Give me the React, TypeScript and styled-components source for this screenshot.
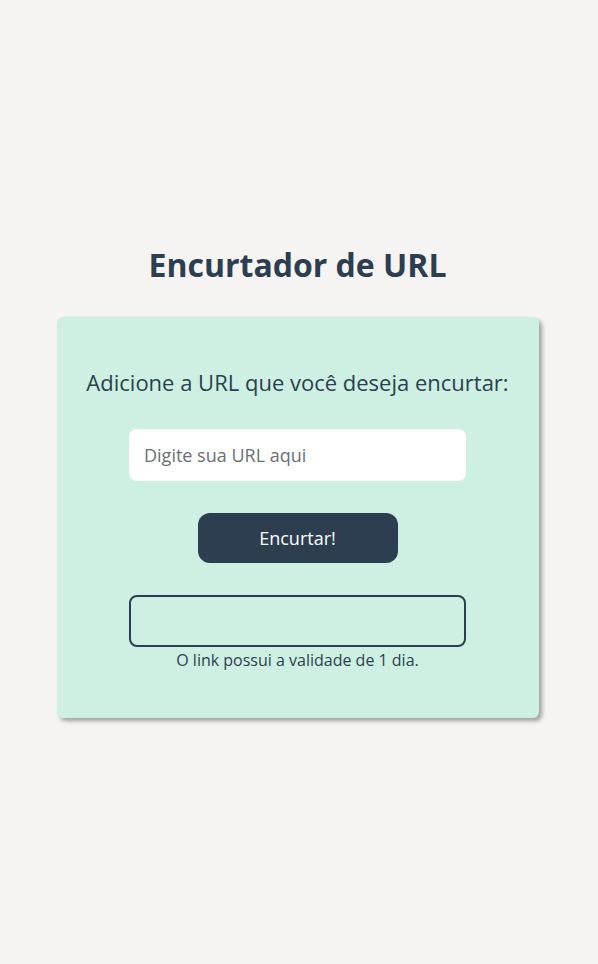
import React from "react";
import styled, { createGlobalStyle } from "styled-components";

const Global = createGlobalStyle`
  html, body { margin: 0; padding: 0; }
  body {
    background: #f5f4f2;
    font-family: "Open Sans", "Noto Sans", sans-serif;
    color: #2c3e50;
  }
  * { box-sizing: border-box; }
`;

const Page = styled.main`
  min-height: 100vh;
  padding: 0 3px 4px 0;
  display: flex;
  flex-direction: column;
  align-items: center;
  justify-content: center;
`;

const Title = styled.h1`
  margin: 0 0 30px;
  font-size: 32px;
  font-weight: 700;
  line-height: 44px;
  color: #2c3e50;
`;

const Card = styled.section`
  width: 482px;
  background: #cef0e2;
  border-radius: 6px;
  box-shadow: 3px 3px 4px rgba(0, 0, 0, 0.35);
  padding: 50px 0 47px;
  display: flex;
  flex-direction: column;
  align-items: center;
`;

const Label = styled.p`
  margin: 0 0 32px;
  font-size: 22px;
  line-height: 30px;
  color: #2c3e50;
`;

const Input = styled.input`
  width: 337px;
  height: 52px;
  border: none;
  border-radius: 8px;
  background: #fff;
  padding: 0 15px;
  font-family: inherit;
  font-size: 18px;
  color: #2c3e50;
  outline: none;
  &::placeholder { color: #6b6f72; }
`;

const Button = styled.button`
  margin-top: 32px;
  width: 200px;
  height: 50px;
  border: none;
  border-radius: 12px;
  background: #2c3e50;
  color: #fff;
  font-family: inherit;
  font-size: 18px;
  cursor: pointer;
`;

const Output = styled.div`
  margin-top: 32px;
  width: 337px;
  height: 52px;
  border: 2px solid #2c3e50;
  border-radius: 8px;
`;

const Note = styled.p`
  margin: 2px 0 0;
  font-size: 16px;
  line-height: 22px;
  color: #2c3e50;
`;

export default function App() {
  return (
    <>
      <Global />
      <Page>
        <Title>Encurtador de URL</Title>
        <Card>
          <Label>Adicione a URL que você deseja encurtar:</Label>
          <Input placeholder="Digite sua URL aqui" />
          <Button>Encurtar!</Button>
          <Output />
          <Note>O link possui a validade de 1 dia.</Note>
        </Card>
      </Page>
    </>
  );
}
